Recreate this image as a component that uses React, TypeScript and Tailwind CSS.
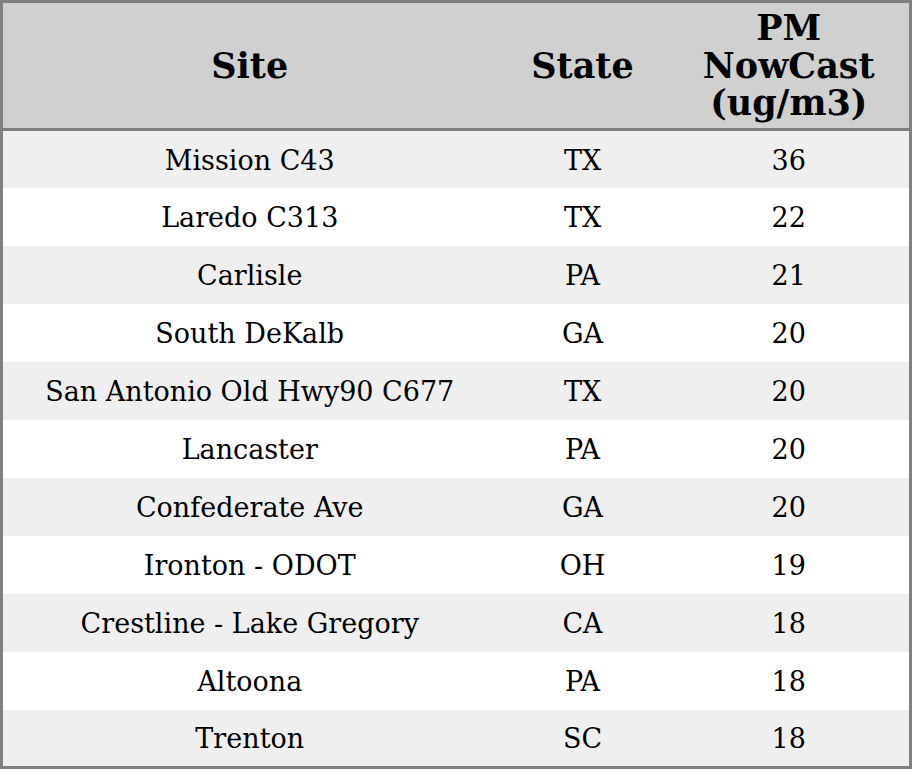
import React from "react";

const rows: [string, string, number][] = [
  ["Mission C43", "TX", 36],
  ["Laredo C313", "TX", 22],
  ["Carlisle", "PA", 21],
  ["South DeKalb", "GA", 20],
  ["San Antonio Old Hwy90 C677", "TX", 20],
  ["Lancaster", "PA", 20],
  ["Confederate Ave", "GA", 20],
  ["Ironton - ODOT", "OH", 19],
  ["Crestline - Lake Gregory", "CA", 18],
  ["Altoona", "PA", 18],
  ["Trenton", "SC", 18],
];

export default function App() {
  return (
    <div className="w-[912px] h-[769px] bg-white font-['DejaVu_Serif',serif] text-black">
      <table className="w-full h-full table-fixed border-collapse border-[3px] border-[#808080]">
        <colgroup>
          <col className="w-[495px]" />
          <col className="w-[172px]" />
          <col />
        </colgroup>
        <thead>
          <tr className="h-[128px] bg-[#d0d0d0] border-b-[3px] border-[#808080]">
            <th className="text-[35px] font-bold leading-[37.5px] p-0">Site</th>
            <th className="text-[35px] font-bold leading-[37.5px] p-0">State</th>
            <th className="text-[35px] font-bold leading-[37.5px] p-0">
              PM
              <br />
              NowCast
              <br />
              (ug/m3)
            </th>
          </tr>
        </thead>
        <tbody>
          {rows.map(([site, state, val], i) => (
            <tr key={site} className={i % 2 === 0 ? "bg-[#efefef] h-[57.7px]" : "bg-white h-[57.7px]"}>
              <td className="text-center text-[27px] p-0 pt-[3px]">{site}</td>
              <td className="text-center text-[27px] p-0 pt-[3px]">{state}</td>
              <td className="text-center text-[27px] p-0 pt-[3px]">{val}</td>
            </tr>
          ))}
        </tbody>
      </table>
    </div>
  );
}
